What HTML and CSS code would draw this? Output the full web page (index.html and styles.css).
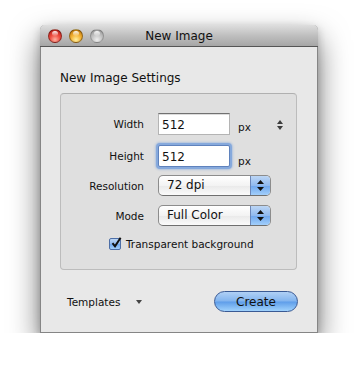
FILE: index.html
```html
<!DOCTYPE html>
<html lang="en">
<head>
  <meta charset="UTF-8" />
  <title>New Image</title>
  <link rel="stylesheet" href="styles.css">
</head>
<body>

  <!-- Window -->
  <div class="window">
    <div class="titlebar">
      <div class="lights">
        <span class="light close"></span>
        <span class="light minimize"></span>
        <span class="light zoom"></span>
      </div>
      <div class="title">New Image</div>
    </div>

    <div class="content">
      <h1 class="heading">New Image Settings</h1>

      <!-- Settings box -->
      <div class="panel">
        <div class="row row-width">
          <span class="label">Width</span>
          <div class="field">512</div>
          <span class="unit">px</span>
          <svg class="stepper" width="6" height="10" viewBox="0 0 6 10">
            <polygon points="0,4 3,0 6,4" />
            <polygon points="0,6 3,10 6,6" />
          </svg>
        </div>
        <div class="row row-height">
          <span class="label">Height</span>
          <div class="field focused">512</div>
          <span class="unit">px</span>
        </div>
        <div class="row row-res">
          <span class="label">Resolution</span>
          <div class="popup">
            <span class="popup-text">72 dpi</span>
            <span class="popup-arrows">
              <svg width="7" height="11" viewBox="0 0 7 11">
                <polygon points="0,4 3.5,0 7,4" />
                <polygon points="0,7 3.5,11 7,7" />
              </svg>
            </span>
          </div>
        </div>
        <div class="row row-mode">
          <span class="label">Mode</span>
          <div class="popup">
            <span class="popup-text">Full Color</span>
            <span class="popup-arrows">
              <svg width="7" height="11" viewBox="0 0 7 11">
                <polygon points="0,4 3.5,0 7,4" />
                <polygon points="0,7 3.5,11 7,7" />
              </svg>
            </span>
          </div>
        </div>
        <div class="row row-check">
          <span class="checkbox">
            <svg width="12" height="12" viewBox="0 0 12 12">
              <path d="M2.5 6.2 L5 9.3 L10.6 0.8" />
            </svg>
          </span>
          <span class="check-label">Transparent background</span>
        </div>
      </div>

      <!-- Footer -->
      <div class="footer">
        <span class="templates">Templates</span>
        <span class="menu-arrow"></span>
        <button class="btn-create">Create</button>
      </div>
    </div>
  </div>

</body>
</html>
```

FILE: styles.css
```css
body {
  margin: 0;
  background-color: #ffffff;
  font-family: 'DejaVu Sans', sans-serif;
  color: #111;
}

.window {
  box-sizing: border-box;
  width: 278px;
  height: 308px;
  margin: 25px 0 0 40px;
  background-color: #e8e8e8;
  border: 1px solid #858585;
  border-top: none;
  border-radius: 5px 5px 0 0;
  box-shadow: 0 14px 30px rgba(0, 0, 0, 0.55), 0 3px 8px rgba(0, 0, 0, 0.2);
}

.titlebar {
  display: grid;
  grid-template-columns: 1fr auto 1fr;
  align-items: center;
  height: 21px;
  margin: 0 -1px;
  border-radius: 5px 5px 0 0;
  border-bottom: 1px solid #555;
  background: linear-gradient(#dedede, #bfbfbf 50%, #a6a6a6);
}

.lights {
  display: flex;
  gap: 7px;
  padding-left: 8px;
}

.light {
  position: relative;
  width: 14px;
  height: 14px;
  box-sizing: border-box;
  border-radius: 50%;
  border: 1px solid rgba(0, 0, 0, 0.35);
}

.light::before {
  content: "";
  position: absolute;
  top: 1px;
  left: 3px;
  width: 6px;
  height: 5px;
  border-radius: 50%;
  background: linear-gradient(rgba(255, 255, 255, 0.95), rgba(255, 255, 255, 0.1));
}

.close {
  background: radial-gradient(circle at 50% 80%, #ffb0a0 0, #ee4a3e 45%, #a9130f 100%);
}

.minimize {
  background: radial-gradient(circle at 50% 80%, #fff0a0 0, #f4b234 45%, #b06800 100%);
}

.zoom {
  background: radial-gradient(circle at 50% 80%, #eeeeee 0, #c4c4c4 45%, #8e8e8e 100%);
  border-color: rgba(0, 0, 0, 0.2);
}

.title {
  font-size: 12px;
  color: #111;
}

.content {
  padding: 0 20px 0 19px;
}

.heading {
  margin: 24px 0 0;
  font-size: 12px;
  font-weight: normal;
  line-height: 15px;
}

.panel {
  margin-top: 7px;
  padding: 19px 0 19px;
  background-color: #dfdfdf;
  border: 1px solid #bcbcbc;
  border-top-color: #b0b0b0;
  border-radius: 4px;
}

.row {
  display: flex;
  align-items: center;
}

.label {
  width: 83px;
  margin-right: 14px;
  text-align: right;
  font-size: 10.5px;
}

.row-height {
  margin-top: 10px;
}

.row-res {
  margin-top: 8px;
}

.row-mode {
  margin-top: 9px;
}

.row-check {
  margin-top: 12px;
  padding-left: 48px;
  gap: 5px;
}

.field {
  box-sizing: border-box;
  width: 72px;
  height: 22px;
  padding: 3px 0 0 3px;
  background-color: #fff;
  border: 1px solid #b4b4b4;
  border-top-color: #717171;
  box-shadow: inset 0 1px 0 #dcdcdc;
  font-size: 12px;
  line-height: 16px;
}

.field.focused {
  border-color: #5f82bd;
  border-radius: 2px;
  box-shadow: 0 0 0 2px #86a9dc, 0 0 2px 3px rgba(120, 160, 220, 0.45);
}

.unit {
  margin: 5px 0 0 8px;
  font-size: 10.5px;
}

.row-height .unit {
  margin-top: 9px;
}

.stepper {
  margin: 2px 13px 0 auto;
  fill: #3d3d3d;
}

.popup {
  display: flex;
  box-sizing: border-box;
  width: 113px;
  height: 21px;
  border: 1px solid #8c8c8c;
  border-bottom-color: #6f6f6f;
  border-radius: 5px;
  overflow: hidden;
  background: linear-gradient(#ffffff, #f3f3f3 50%, #e9e9e9 51%, #fbfbfb);
}

.popup-text {
  flex: 1;
  padding-left: 8px;
  font-size: 12px;
  line-height: 19px;
}

.popup-arrows {
  display: flex;
  align-items: center;
  justify-content: center;
  width: 19px;
  border-left: 1px solid #6c87b8;
  background: linear-gradient(#bcd6f5, #90b9ee 50%, #6ea6ed 51%, #a2cffb);
}

.popup-arrows svg {
  fill: #111;
}

.checkbox {
  box-sizing: border-box;
  width: 12px;
  height: 12px;
  border: 1px solid #4d6ea6;
  border-radius: 2px;
  background: linear-gradient(#bcd6f5, #90b9ee 50%, #6ea6ed 51%, #a2cffb);
}

.checkbox svg {
  display: block;
  margin: -2px 0 0 0;
  overflow: visible;
}

.checkbox path {
  fill: none;
  stroke: #111;
  stroke-width: 2;
}

.check-label {
  font-size: 10.5px;
}

.footer {
  display: flex;
  align-items: center;
  margin-top: 21px;
  padding-left: 7px;
}

.templates {
  font-size: 10.5px;
}

.menu-arrow {
  width: 0;
  height: 0;
  margin: 1px 0 0 16px;
  border-left: 3.5px solid transparent;
  border-right: 3.5px solid transparent;
  border-top: 4px solid #444;
}

.btn-create {
  box-sizing: border-box;
  width: 84px;
  height: 21px;
  margin-left: auto;
  margin-right: -1px;
  padding: 0;
  border: 1px solid #3a5a94;
  border-radius: 11px;
  background: linear-gradient(#b0d0f5, #82b4ee 48%, #5e9de9 52%, #a0d2fc);
  font-family: 'DejaVu Sans', sans-serif;
  font-size: 12px;
  color: #111;
}
```
